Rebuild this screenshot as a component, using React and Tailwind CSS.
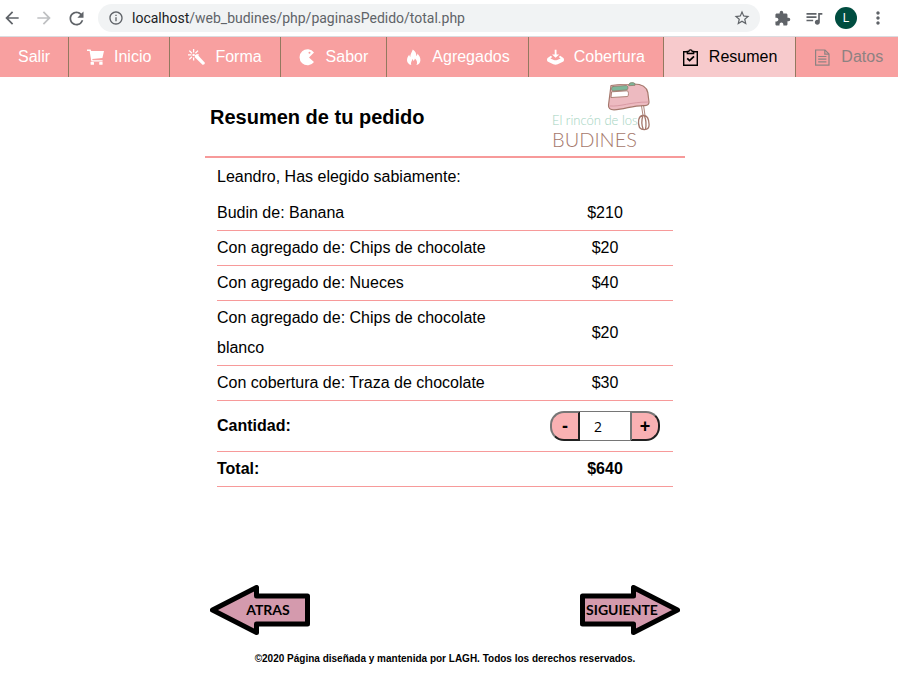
import { useState } from "react";
import {
  MdArrowBack,
  MdArrowForward,
  MdRefresh,
  MdInfoOutline,
  MdStarBorder,
  MdQueueMusic,
  MdMoreVert,
} from "react-icons/md";

function Icon({ children }) {
  return (
    <svg viewBox="0 0 17 17" className="h-[17px] w-[17px] shrink-0" fill="currentColor" aria-hidden="true">
      {children}
    </svg>
  );
}

const CartIcon = () => (
  <Icon>
    <path d="M0 .5h3.600l.6 1.600H17l-1.600 7-10.200.9.4 1.200h10v1.300H4.400L2.600 1.900H0z" />
    <rect x="3.600" y="13" width="3.400" height="2.800" rx=".6" />
    <rect x="12.200" y="13" width="3.400" height="2.800" rx=".6" />
  </Icon>
);

const WandIcon = () => (
  <Icon>
    <path d="M6.9 5.9l2.4-.3 7.4 7.8c.6 1.4-.8 2.8-2.2 2.3L6.800 8.200z" />
    <path
      d="M5.600 0v3.400M1.300 1.600l2.600 2.600M0 5.900h3.400M1.300 10.400l2.600-2.600M5.600 8.600v3M7.400 4.200L10 1.600M8.200 5.900h2.600"
      stroke="currentColor"
      strokeWidth="1.300"
      fill="none"
    />
    <circle cx="5.600" cy="5.900" r="1.200" />
  </Icon>
);

const PacmanIcon = () => (
  <Icon>
    <path
      fillRule="evenodd"
      d="M15 3.600A8 8 0 1 0 15 13L10 8.400zM10.500 2.800a1 1 0 1 1 0 2 1 1 0 0 1 0-2z"
    />
  </Icon>
);

const FireIcon = () => (
  <Icon>
    <path d="M7.800.4c2.700 1.900 3.800 4.200 3.400 6.500.9-.4 1.300-1.200 1.200-2.400 2 2.100 3.200 4.500 3 6.900-.2 2.300-1.600 4-4 4.700 1.300-2.300.7-4.600-1.500-6.600-.2 1.200-.7 1.900-1.500 2.400-.2-.9-.5-1.400-1.100-1.900-.1 2-2 3.400-.9 6.100-2.700-.7-4.300-2.500-4.400-4.900 0-2 .9-3.700 2.200-5.400.2 1 .5 1.700 1.100 2.100C5.200 5.200 6.800 3.300 7.800.4z" />
  </Icon>
);

const CoverIcon = () => (
  <Icon>
    <path d="M7.700.8h1.800v4.600h2.700L8.600 8.800 5 5.400h2.700z" />
    <path d="M3.800 6.800L.6 9c-.8.8-.8 2.600 0 3.400l5.700 2.800c1.400.6 3 .6 4.400 0l5.700-2.800c.8-.8.8-2.600 0-3.400l-3.200-2.200-1.400 1.300 1.800 1.300-3.400 1.500c-1.100.4-2.300.4-3.400 0L3.400 9.400l1.800-1.300z" />
  </Icon>
);

const ClipboardIcon = () => (
  <Icon>
    <g fill="none" stroke="currentColor">
      <path d="M5 2.700H1.700v13.500h13.600V2.700H12" strokeWidth="1.400" />
      <path d="M5.300 2.500h1.500c.2-2.300 3.200-2.300 3.400 0h1.500v2H5.300z" strokeWidth="1.300" />
      <path d="M5.200 9.300l2.400 2.300 4.400-4.300" strokeWidth="1.800" />
    </g>
  </Icon>
);

const FileIcon = () => (
  <Icon>
    <g fill="none" stroke="currentColor" strokeWidth="1.200">
      <path d="M1.600 1h9.400l4 4v11.200H1.600z" />
      <path d="M10.800 1v4.200H15M4.200 7.500h8.200M4.200 10.200h8.200M4.200 12.900h8.200" />
    </g>
  </Icon>
);

const tabs = [
  { label: "Salir" },
  { label: "Inicio", icon: CartIcon },
  { label: "Forma", icon: WandIcon },
  { label: "Sabor", icon: PacmanIcon },
  { label: "Agregados", icon: FireIcon },
  { label: "Cobertura", icon: CoverIcon },
  { label: "Resumen", icon: ClipboardIcon, style: "bg-[#f7cacc] text-black" },
  { label: "Datos", icon: FileIcon, style: "text-[#8d8282]" },
];

const lines = [
  { text: "Budin de: Banana", price: 210 },
  { text: "Con agregado de: Chips de chocolate", price: 20 },
  { text: "Con agregado de: Nueces", price: 40 },
  { text: "Con agregado de: Chips de chocolate blanco", price: 20 },
  { text: "Con cobertura de: Traza de chocolate", price: 30 },
];

function Tool({ label, children, className = "" }) {
  return (
    <button
      type="button"
      aria-label={label}
      className={`flex h-6 w-6 shrink-0 items-center justify-center text-[#5f6368] ${className}`}
    >
      {children}
    </button>
  );
}

function BrowserBar() {
  return (
    <div className="flex h-[37px] items-center gap-2.5 border-b border-[#dadce0] bg-white pr-2">
      <div className="flex gap-2">
        <Tool label="Atrás"><MdArrowBack size={20} /></Tool>
        <Tool label="Adelante" className="opacity-40"><MdArrowForward size={20} /></Tool>
        <Tool label="Recargar"><MdRefresh size={21} /></Tool>
      </div>
      <div className="flex h-7 min-w-0 flex-1 items-center rounded-full bg-[#f1f3f4] pr-1.5 pl-2.5 font-[Roboto,sans-serif] text-sm text-[#5f6368]">
        <MdInfoOutline size={16} className="mr-2 shrink-0" />
        <span className="min-w-0 flex-1 truncate">
          <span className="text-[#202124]">localhost</span>/web_budines/php/paginasPedido/total.php
        </span>
        <Tool label="Favorito"><MdStarBorder size={18} /></Tool>
      </div>
      <div className="flex gap-2">
        <Tool label="Extensiones">
          <svg viewBox="0 0 24 24" className="h-[17px] w-[17px]" fill="currentColor" aria-hidden="true">
            <path d="M20.500 11H19V7c0-1.100-.9-2-2-2h-4V3.500a2.500 2.500 0 0 0-5 0V5H4c-1.100 0-1.990.9-1.990 2v3.800H3.500c1.490 0 2.700 1.210 2.700 2.700s-1.210 2.700-2.700 2.700H2V20c0 1.100.9 2 2 2h3.800v-1.500c0-1.490 1.210-2.700 2.700-2.700s2.700 1.210 2.700 2.700V22H17c1.100 0 2-.9 2-2v-4h1.500a2.500 2.500 0 0 0 0-5z" />
          </svg>
        </Tool>
        <Tool label="Multimedia"><MdQueueMusic size={20} /></Tool>
        <Tool label="Perfil">
          <span className="flex h-[22px] w-[22px] shrink-0 items-center justify-center rounded-full bg-[#004d40] font-[Roboto,sans-serif] text-xs text-white">
            L
          </span>
        </Tool>
        <Tool label="Menú"><MdMoreVert size={20} /></Tool>
      </div>
    </div>
  );
}

function Logo() {
  return (
    <svg viewBox="0 0 102 70" className="h-[70px] w-[102px]" role="img" aria-label="El rincón de los Budines">
      <g strokeLinecap="round" strokeLinejoin="round">
        <path d="M92.500 24l1.500 9.500h2L94.500 23" fill="#fff" stroke="#a5786c" strokeWidth=".9" />
        <path
          d="M62 3.500c7-.8 14-1.500 22-1.500 9-.2 13.500 2.500 14.800 8.500l1.200 9.500c0 2.500-1.500 3.500-4 3.600-12-.6-20 4-31 4.200-4 0-5.800-1.500-5.500-4.800z"
          fill="#edbac0"
          stroke="#a5786c"
          strokeWidth="1.200"
        />
        <path d="M61 24c11 .8 20-4 38-4" stroke="#d99aa4" fill="none" />
        <path d="M63 9.800l15.500-1c1.300 1.500 1.200 4.200.2 5.700l-16.400 1z" fill="#fff" stroke="#a5786c" strokeWidth=".9" />
        <path d="M64 4.500l13.500-1c1.700.3 2 3.700.3 4.400L64 9c-2-.4-2-4-.0-4.500z" fill="#7db79a" stroke="#8b7d6b" strokeWidth=".8" />
        <path d="M80 2c.3-1.600 4.700-2 6-.3v1.600l-6 .4z" fill="#7db79a" stroke="#8b7d6b" strokeWidth=".8" />
        <path
          d="M93.500 33.500c-4.200 1-5 6.500-3 12 1.600 2 3 2.300 5 2.200 3-.2 4.700-2.200 4.600-5.200-.2-5-1.500-8.500-4.600-9zM93.800 34c-1.300 4-1 9.500.4 13.300M95.500 34c1.600 4 1.800 9 1 13"
          fill="none"
          stroke="#a5786c"
          strokeWidth="1.300"
        />
      </g>
      <text x="3" y="43" className="fill-[#a3d3c0] font-[Lato,sans-serif] text-[13px] font-light">
        El rincón de los
      </text>
      <text x="3" y="65" className="fill-[#a5786c] font-[Lato,sans-serif] text-[20px] font-light">
        BUDINES
      </text>
    </svg>
  );
}

function ArrowLink({ label, next }) {
  return (
    <a href={next ? "#siguiente" : "#atras"} className="relative flex h-[50px] w-[100px] items-center justify-center">
      <svg viewBox="0 0 100 50" className={`absolute inset-0 h-full w-full ${next ? "-scale-x-100" : ""}`} aria-hidden="true">
        <path
          d="M2.500 25L46.500 2.500V11H97.500V39H46.500V47.500z"
          fill="#d49aad"
          stroke="#000"
          strokeWidth="5"
          strokeLinejoin="round"
        />
      </svg>
      <span
        className={`relative font-[Lato,sans-serif] text-sm leading-5 font-bold text-black ${next ? "pr-4" : "pl-4"}`}
      >
        {label}
      </span>
    </a>
  );
}

export default function App() {
  const [quantity, setQuantity] = useState(2);
  const total = quantity * lines.reduce((sum, line) => sum + line.price, 0);
  const step =
    "h-[30px] w-[30px] border-2 border-t-[#767676] border-r-[#212121] border-b-[#212121] border-l-[#767676] bg-[#f9b1b3] text-lg leading-5 font-bold";

  return (
    <div className="min-h-screen overflow-hidden bg-white font-['Liberation_Sans',Arial,sans-serif] text-base text-black">
      <BrowserBar />
      <nav className="flex h-10 overflow-hidden bg-[#f8a0a0]">
        {tabs.map(({ label, icon: TabIcon, style = "text-white" }, i) => (
          <a
            key={label}
            href={`#${label.toLowerCase()}`}
            className={`flex shrink-0 items-center gap-2.5 px-[18px] ${style} ${i < tabs.length - 1 ? "border-r border-[#93795f]" : ""}`}
          >
            {TabIcon && <TabIcon />}
            {label}
          </a>
        ))}
      </nav>

      <div className="flex flex-col items-center pr-2">
        <main className="w-full max-w-[480px]">
          <header className="flex h-[81px] items-center justify-between border-b-2 border-[#f79a9a] pr-[34px] pl-[5px]">
            <h1 className="text-xl font-bold">Resumen de tu pedido</h1>
            <Logo />
          </header>

          <section className="px-3">
            <p className="py-1 leading-[30px]">Leandro, Has elegido sabiamente:</p>
            <table className="w-full table-fixed border-collapse leading-[30px]">
              <colgroup>
                <col />
                <col className="w-[136px]" />
              </colgroup>
              <tbody>
                {lines.map(({ text, price }) => (
                  <tr key={text} className="border-b border-[#f79a9a]">
                    <td className="py-0.5 pr-8">{text}</td>
                    <td className="py-0.5 text-center">${price}</td>
                  </tr>
                ))}
                <tr className="border-b border-[#f79a9a]">
                  <th scope="row" className="py-2.5 text-left">
                    <label htmlFor="cantidad">Cantidad:</label>
                  </th>
                  <td className="py-2.5">
                    <div className="flex justify-center">
                      <button
                        type="button"
                        aria-label="Restar"
                        onClick={() => setQuantity(Math.max(1, quantity - 1))}
                        className={`${step} rounded-l-[14px]`}
                      >
                        -
                      </button>
                      <input
                        id="cantidad"
                        inputMode="numeric"
                        value={quantity}
                        onChange={(e) => setQuantity(Number(e.target.value) || 1)}
                        className="h-[30px] w-[50px] border-y border-[#767676] pl-3.5 font-['Open_Sans',sans-serif] text-sm"
                      />
                      <button
                        type="button"
                        aria-label="Sumar"
                        onClick={() => setQuantity(quantity + 1)}
                        className={`${step} rounded-r-[14px]`}
                      >
                        +
                      </button>
                    </div>
                  </td>
                </tr>
                <tr className="border-b border-[#f79a9a] font-bold">
                  <th scope="row" className="py-0.5 text-left">Total:</th>
                  <td className="py-0.5 text-center">${total}</td>
                </tr>
              </tbody>
            </table>
          </section>

          <div className="mt-[98px] flex items-center justify-between px-[5px]">
            <ArrowLink label="ATRAS" />
            <ArrowLink label="SIGUIENTE" next />
          </div>
        </main>
        <footer className="mt-4 text-[10px] leading-4 font-bold">
          ©2020 Página diseñada y mantenida por LAGH. Todos los derechos reservados.
        </footer>
      </div>
    </div>
  );
}
